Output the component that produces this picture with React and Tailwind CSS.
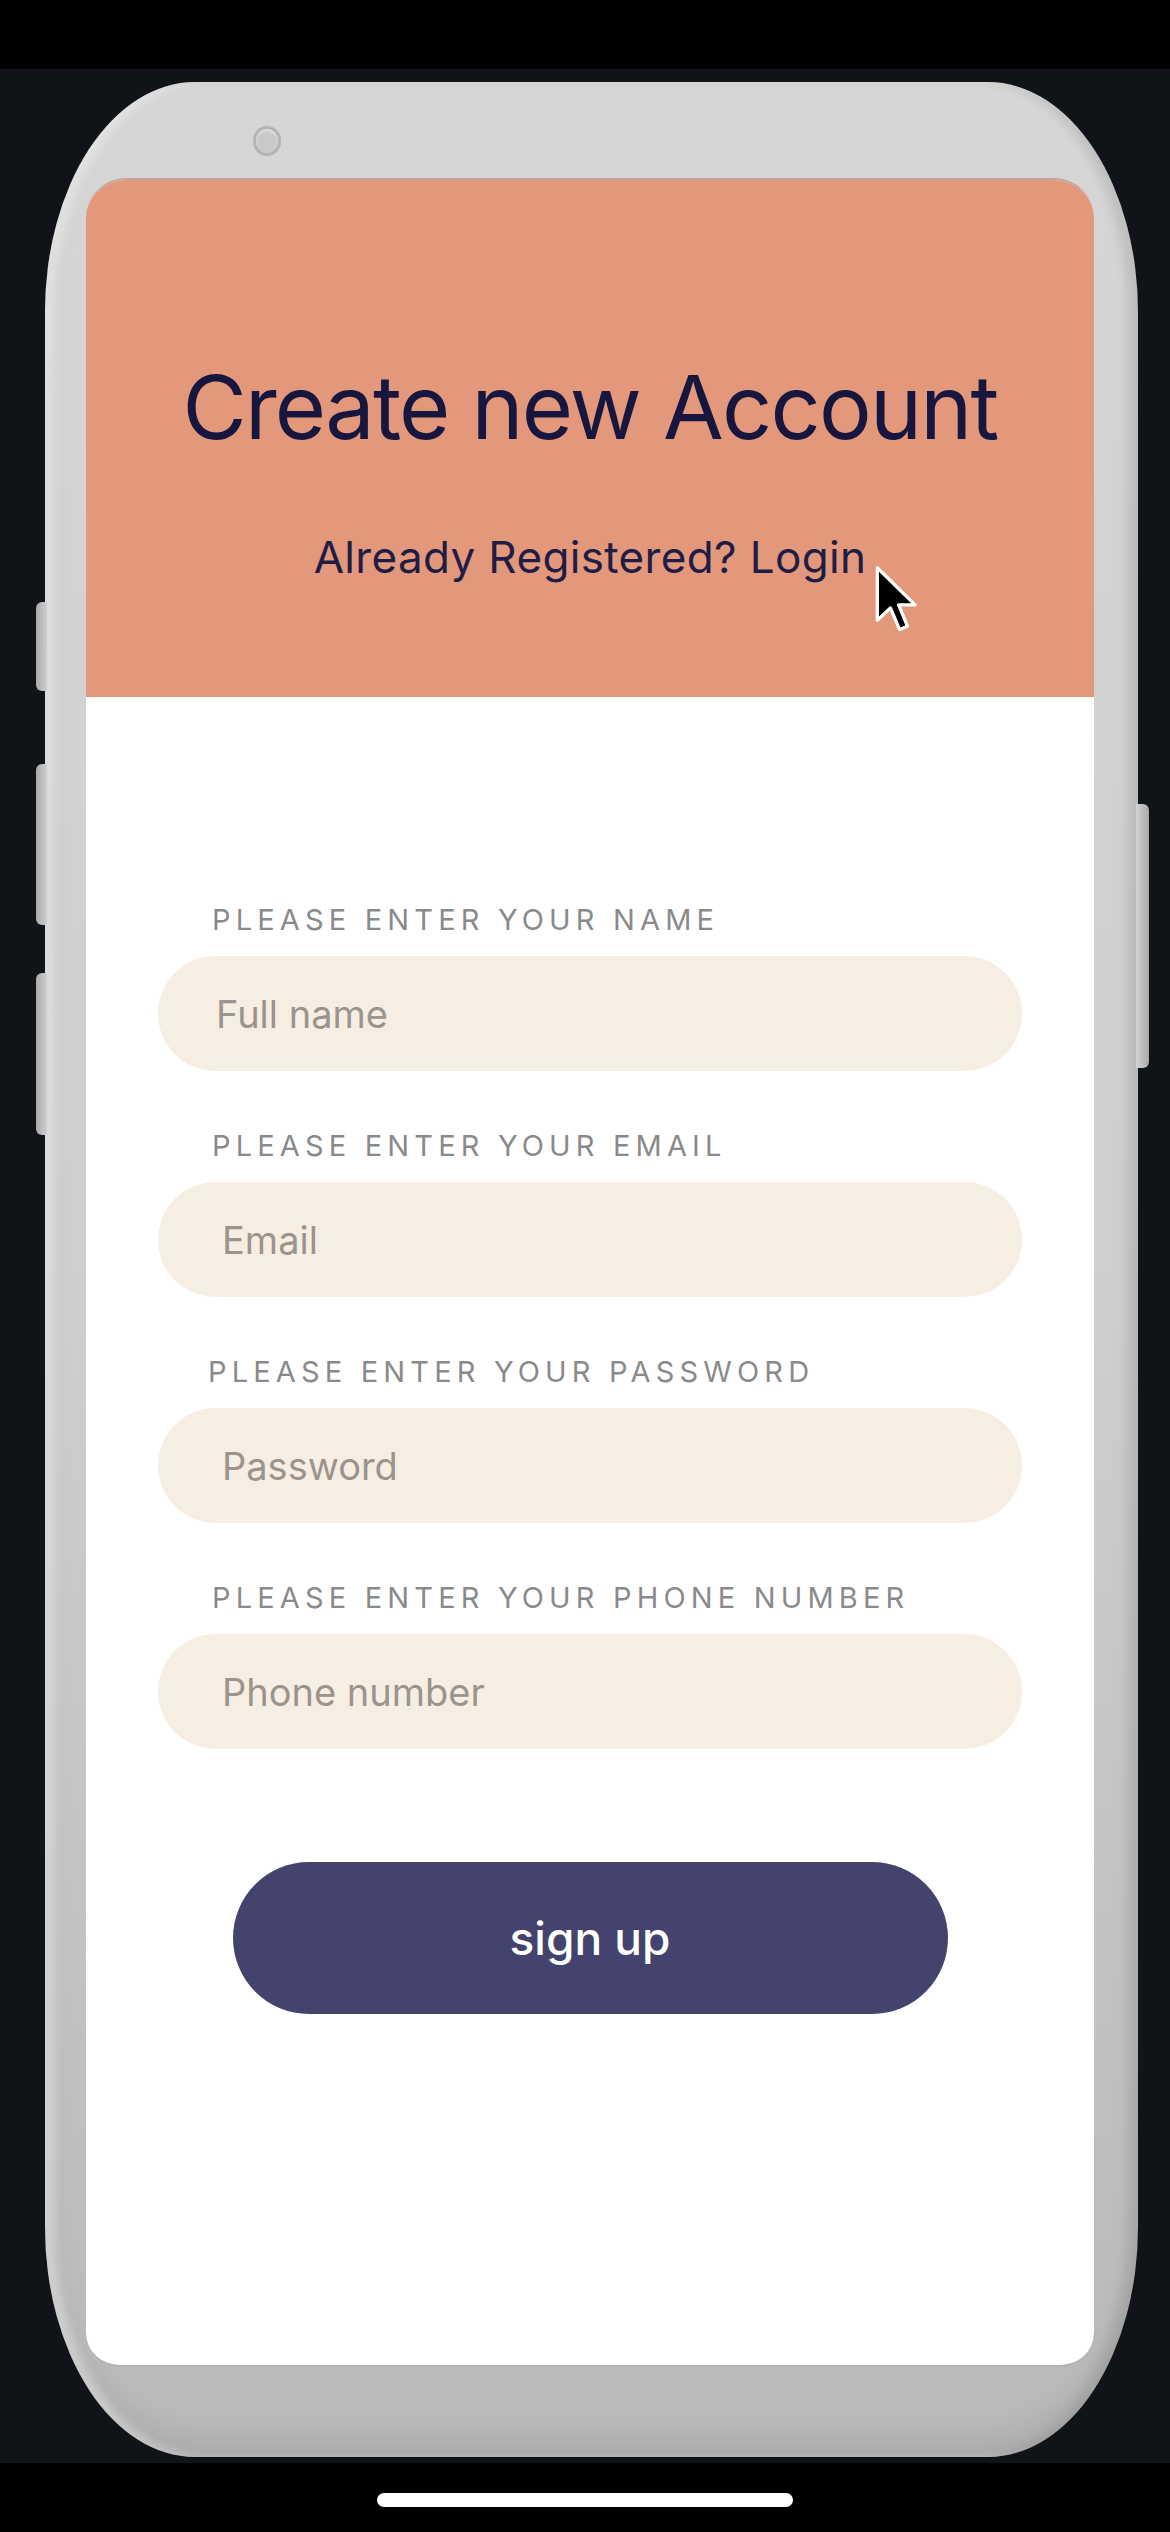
import React from "react";

const font = { fontFamily: "Inter, 'Noto Sans', sans-serif" };

function Field({ label, placeholder, labelPad = "pl-[54px]", inputPad = "pl-[64px]" }) {
  return (
    <div className="flex flex-col">
      <div className={`${labelPad} text-[29px] leading-none tracking-[0.178em] text-[#8a8a8a]`}>{label}</div>
      <div className={`mt-[22px] h-[115px] w-full rounded-full bg-[#f7eee3] flex items-center ${inputPad}`}>
        <span className="text-[38px] leading-none text-[#9b948d]">{placeholder}</span>
      </div>
    </div>
  );
}

export default function App() {
  return (
    <div className="w-[1170px] h-[2532px] bg-black flex flex-col overflow-hidden" style={font}>
      <div className="h-[69px] bg-black shrink-0" />
      <div className="flex-1 bg-[#101317] flex flex-col">
        <div className="relative mt-[13px] ml-[45px] w-[1093px] h-[2375px] rounded-[150px/230px] bg-linear-to-b from-[#d6d6d6] via-[#cfcfcf] to-[#b9b9b9] shadow-[inset_10px_0_8px_rgba(255,255,255,0.35),inset_-10px_0_10px_rgba(0,0,0,0.08),inset_0_-20px_30px_rgba(0,0,0,0.08)] pt-[96px] pb-[90px] pl-[41px] pr-[44px] flex flex-col">
          {/* side buttons */}
          <div className="absolute left-[-9px] top-[520px] w-[11px] h-[89px] rounded-l-[6px] bg-linear-to-r from-[#a9a9a9] to-[#cfcfcf]" />
          <div className="absolute left-[-9px] top-[682px] w-[11px] h-[161px] rounded-l-[6px] bg-linear-to-r from-[#a9a9a9] to-[#cfcfcf]" />
          <div className="absolute left-[-9px] top-[891px] w-[11px] h-[162px] rounded-l-[6px] bg-linear-to-r from-[#a9a9a9] to-[#cfcfcf]" />
          <div className="absolute right-[-11px] top-[722px] w-[13px] h-[264px] rounded-r-[6px] bg-linear-to-l from-[#a9a9a9] to-[#d4d4d4]" />
          {/* camera */}
          <div className="absolute left-[208px] top-[44px] w-[28px] h-[30px] rounded-full bg-[#c9c9c9] border-[3px] border-[#b4b4b4] shadow-[inset_0_2px_3px_rgba(255,255,255,0.5)]" />

          {/* screen */}
          <div className="flex-1 rounded-t-[40px] rounded-b-[34px] overflow-hidden bg-white flex flex-col border-t-2 border-[#b9a79d] border-b-2 border-b-[#b3b3b3]">
            <div className="h-[517px] bg-[#e3977b] flex flex-col items-center shrink-0">
              <div className="mt-[183px] text-[88px] leading-none tracking-[-0.02em] text-[#17163f]">Create new Account</div>
              <div className="mt-[84px] text-[44px] leading-none tracking-[0.008em] text-[#1f1d45]">Already Registered? Login</div>
            </div>
            <div className="flex-1 flex flex-col px-[72px] pt-[208px]">
              <div className="flex flex-col gap-[60px]">
                <Field label="PLEASE ENTER YOUR NAME" placeholder="Full name" inputPad="pl-[58px]" />
                <Field label="PLEASE ENTER YOUR EMAIL" placeholder="Email" />
                <Field label="PLEASE ENTER YOUR PASSWORD" placeholder="Password" labelPad="pl-[50px]" />
                <Field label="PLEASE ENTER YOUR PHONE NUMBER" placeholder="Phone number" />
              </div>
              <div className="mt-[113px] flex justify-center">
                <div className="w-[715px] h-[152px] rounded-full bg-[#43436e] flex items-center justify-center">
                  <span className="text-[46px] leading-none font-medium text-white">sign up</span>
                </div>
              </div>
            </div>
          </div>

          {/* cursor */}
          <svg className="absolute left-[829px] top-[482px]" width="46" height="70" viewBox="-1 -1 14 21">
            <path d="M0 0 L0 16 L4 12.2 L6.8 18.8 L9.2 17.8 L6.5 11.3 L11.5 11.3 Z" fill="#000" stroke="#fff" strokeWidth="1" strokeLinejoin="round" />
          </svg>
        </div>
      </div>
      <div className="h-[69px] bg-black shrink-0 flex justify-center">
        <div className="mt-[30px] w-[416px] h-[14px] rounded-full bg-white" />
      </div>
    </div>
  );
}
